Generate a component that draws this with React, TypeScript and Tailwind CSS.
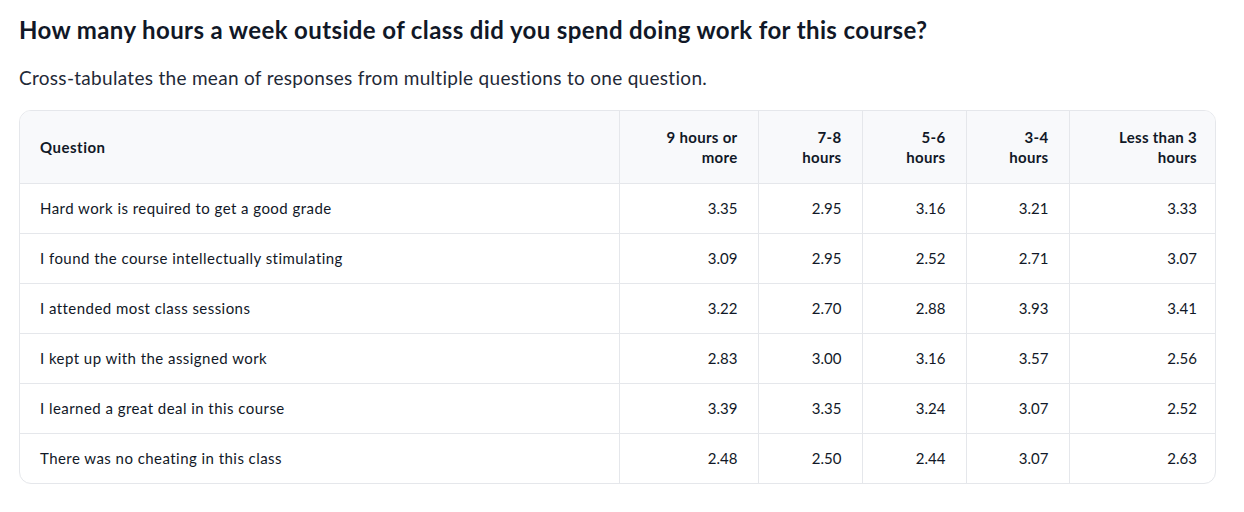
import React from "react";

const columns = ["9 hours or more", "7-8 hours", "5-6 hours", "3-4 hours", "Less than 3 hours"];
const colWidths = ["w-[599px]", "w-[139px]", "w-[104px]", "w-[104px]", "w-[103px]", "w-[148px]"];

const rows: { question: string; values: string[] }[] = [
  { question: "Hard work is required to get a good grade", values: ["3.35", "2.95", "3.16", "3.21", "3.33"] },
  { question: "I found the course intellectually stimulating", values: ["3.09", "2.95", "2.52", "2.71", "3.07"] },
  { question: "I attended most class sessions", values: ["3.22", "2.70", "2.88", "3.93", "3.41"] },
  { question: "I kept up with the assigned work", values: ["2.83", "3.00", "3.16", "3.57", "2.56"] },
  { question: "I learned a great deal in this course", values: ["3.39", "3.35", "3.24", "3.07", "2.52"] },
  { question: "There was no cheating in this class", values: ["2.48", "2.50", "2.44", "3.07", "2.63"] },
];

export default function App() {
  return (
    <div className="min-h-screen bg-white px-[19px] pt-[15px] font-['Lato',sans-serif] text-[#111827]">
      <h1 className="text-[24px] font-bold leading-[30px] tracking-[0.38px]">
        How many hours a week outside of class did you spend doing work for this course?
      </h1>
      <p className="mt-[20px] text-[19px] leading-[26px] tracking-[0.3px] text-[#1f2937]">
        Cross-tabulates the mean of responses from multiple questions to one question.
      </p>

      <div className="mt-[19px] w-[1197px] overflow-hidden rounded-xl border border-[#e5e7eb]">
        <table className="w-full table-fixed border-collapse">
          <colgroup>
            {colWidths.map((w, i) => (
              <col key={i} className={w} />
            ))}
          </colgroup>
          <thead>
            <tr className="bg-[#f8f9fb]">
              <th className="px-5 py-4 text-left text-[15px] font-bold leading-[21px] tracking-[0.5px]">
                Question
              </th>
              {columns.map((c) => (
                <th
                  key={c}
                  className="border-l border-[#e5e7eb] px-5 py-4 text-right text-[15px] font-bold leading-[20px] tracking-[0.3px]"
                >
                  {c}
                </th>
              ))}
            </tr>
          </thead>
          <tbody>
            {rows.map((r) => (
              <tr key={r.question} className="border-t border-[#e5e7eb]">
                <td className="px-5 py-[15px] text-[15px] leading-[19px] tracking-[0.45px]">{r.question}</td>
                {r.values.map((v, i) => (
                  <td
                    key={i}
                    className="border-l border-[#e5e7eb] px-5 py-[15px] text-right text-[15px] leading-[19px]"
                  >
                    {v}
                  </td>
                ))}
              </tr>
            ))}
          </tbody>
        </table>
      </div>
    </div>
  );
}
